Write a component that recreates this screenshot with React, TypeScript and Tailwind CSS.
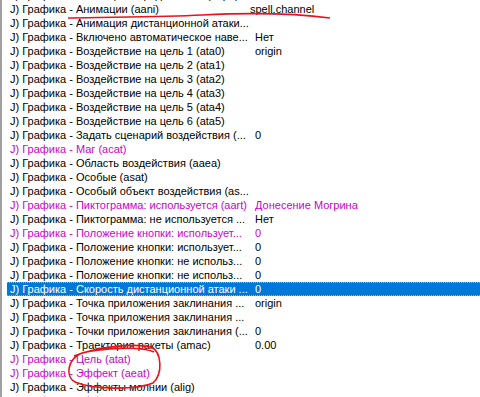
type Row = { name: string; value?: string; pink?: boolean; selected?: boolean };

const rows: Row[] = [
  { name: "J) Графика - Анимации - проджектайл (aap1)" },
  { name: "J) Графика - Анимации (aani)", value: "spell,channel" },
  { name: "J) Графика - Анимация дистанционной атаки..." },
  { name: "J) Графика - Включено автоматическое наве...", value: "Нет" },
  { name: "J) Графика - Воздействие на цель 1 (ata0)", value: "origin" },
  { name: "J) Графика - Воздействие на цель 2 (ata1)" },
  { name: "J) Графика - Воздействие на цель 3 (ata2)" },
  { name: "J) Графика - Воздействие на цель 4 (ata3)" },
  { name: "J) Графика - Воздействие на цель 5 (ata4)" },
  { name: "J) Графика - Воздействие на цель 6 (ata5)" },
  { name: "J) Графика - Задать сценарий воздействия (...", value: "0" },
  { name: "J) Графика - Маг (acat)", pink: true },
  { name: "J) Графика - Область воздействия (aaea)" },
  { name: "J) Графика - Особые (asat)" },
  { name: "J) Графика - Особый объект воздействия (as..." },
  { name: "J) Графика - Пиктограмма: используется (aart)", value: "Донесение Могрина", pink: true },
  { name: "J) Графика - Пиктограмма: не используется ...", value: "Нет" },
  { name: "J) Графика - Положение кнопки: использует...", value: "0", pink: true },
  { name: "J) Графика - Положение кнопки: использует...", value: "0" },
  { name: "J) Графика - Положение кнопки: не использ...", value: "0" },
  { name: "J) Графика - Положение кнопки: не использ...", value: "0" },
  { name: "J) Графика - Скорость дистанционной атаки ...", value: "0", selected: true },
  { name: "J) Графика - Точка приложения заклинания ...", value: "origin" },
  { name: "J) Графика - Точка приложения заклинания ..." },
  { name: "J) Графика - Точки приложения заклинания (...", value: "0" },
  { name: "J) Графика - Траектория ракеты (amac)", value: "0.00" },
  { name: "J) Графика - Цель (atat)", pink: true },
  { name: "J) Графика - Эффект (aeat)", pink: true },
  { name: "J) Графика - Эффекты молнии (alig)" },
  { name: "J) Графика - Эффекты (aefs)", pink: true },
];

export default function App() {
  return (
    <div
      className="relative h-[397px] w-[480px] overflow-hidden bg-white border-l-2 border-[#a0a0a0] text-[11px] leading-[14px]"
      style={{ fontFamily: '"Liberation Sans", Arial, sans-serif' }}
    >
      <div className="mt-[-12px] ml-[5px]">
        {rows.map((row, i) => (
          <div
            key={i}
            className={
              row.selected
                ? "flex h-[14px] items-center whitespace-nowrap bg-[#0078d7] text-white border-y border-dotted border-[#f0a050]"
                : row.pink
                ? "flex h-[14px] items-center whitespace-nowrap text-[#cc00cc]"
                : "flex h-[14px] items-center whitespace-nowrap text-black"
            }
          >
            <span className="w-[248px] shrink-0 overflow-hidden pl-[3px]">{row.name}</span>
            <span className={i === 1 ? "-ml-[5px]" : ""}>{row.value}</span>
          </div>
        ))}
      </div>

      <svg className="pointer-events-none absolute left-0 top-0" width="480" height="397">
        <path
          d="M66 18 C 110 17, 160 17, 200 15 S 290 13, 328 18"
          fill="none"
          stroke="#e8141c"
          strokeWidth="1.6"
        />
        <path
          d="M152 352 C 140 346, 100 348, 80 353 C 65 359, 63 377, 73 382 C 92 390, 135 390, 151 383 C 161 374, 160 352, 149 347 C 130 343, 95 347, 72 356"
          fill="none"
          stroke="#e8141c"
          strokeWidth="1.6"
        />
      </svg>
    </div>
  );
}
